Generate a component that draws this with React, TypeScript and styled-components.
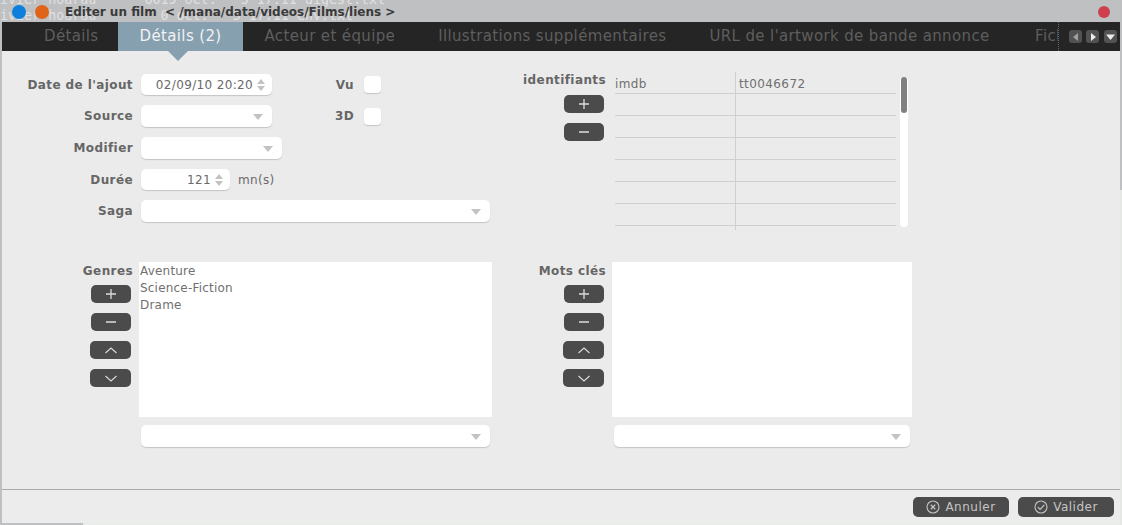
import React from "react";
import styled, { createGlobalStyle } from "styled-components";

const Global = createGlobalStyle`
  html, body { margin: 0; padding: 0; background: #bfc0c2; overflow: hidden; }
  * { box-sizing: border-box; }
`;

const Screen = styled.div`
  position: relative;
  width: 1122px;
  height: 525px;
  overflow: hidden;
  background: #bfc0c2;
  font-family: "DejaVu Sans", sans-serif;
  display: flex;
  flex-direction: column;
`;

const GhostText = styled.pre`
  position: absolute;
  left: 0;
  top: -8px;
  margin: 0;
  font: 13.33px/16px "DejaVu Sans Mono", monospace;
  color: #e0e0e0;
`;

const TitleBar = styled.div`
  position: relative;
  height: 22px;
  flex: none;
  display: flex;
  align-items: center;
  padding: 2px 0 0 12px;
`;

const Dot = styled.span<{ $c: string }>`
  width: 14px;
  height: 14px;
  border-radius: 50%;
  background: ${(p) => p.$c};
  margin-right: 9px;
  flex: none;
`;

const Title = styled.span`
  font-size: 12px;
  font-weight: 700;
  color: #3a3a3a;
  margin-left: 7px;
  white-space: pre;
  flex: 1;
`;

const CloseDot = styled(Dot)`
  width: 12px;
  height: 12px;
  margin-right: 12px;
`;

const TabBar = styled.div`
  position: relative;
  height: 29px;
  flex: none;
  margin: 0 2px;
  background: #252525;
  display: flex;
  align-items: center;
`;

const TabStrip = styled.div`
  width: 1057px;
  height: 100%;
  overflow: hidden;
  display: flex;
  padding-left: 20.5px;
  flex: none;
  border-right: 1px dotted #666;
`;

const Tab = styled.div<{ $active?: boolean; $right?: number }>`
  position: relative;
  height: 100%;
  flex: none;
  padding: 0 ${(p) => p.$right ?? 21.5}px 2px 21.5px;
  display: flex;
  align-items: center;
  font-size: 15px;
  letter-spacing: 0.36px;
  white-space: nowrap;
  color: ${(p) => (p.$active ? "#f2f2f2" : "#5e5e5e")};
  background: ${(p) => (p.$active ? "#86a0b0" : "transparent")};
`;

const TabArrow = styled.span`
  position: absolute;
  z-index: 2;
  left: 168px;
  top: 51px;
  width: 0;
  height: 0;
  border-left: 10.5px solid transparent;
  border-right: 10.5px solid transparent;
  border-top: 10px solid #86a0b0;
`;

const ScrollButtons = styled.div`
  display: flex;
  margin-left: 10px;
  gap: 4px;
`;

const ScrollBtn = styled.span<{ $dim?: boolean; $apart?: boolean }>`
  width: 13px;
  height: 13px;
  border-radius: 3px;
  background: #525252;
  display: flex;
  align-items: center;
  justify-content: center;
  color: ${(p) => (p.$dim ? "#a0a0a0" : "#ececec")};
  margin-left: ${(p) => (p.$apart ? "1px" : "0")};
`;

const Panel = styled.div`
  flex: none;
  height: 438px;
  margin: 0 2px;
  background: #ebebeb;
  display: flex;
  flex-direction: column;
`;

const TopArea = styled.div`
  height: 190px;
  flex: none;
  margin-top: 21px;
  display: flex;
`;

const FormCol = styled.div`
  width: 488px;
  flex: none;
  display: flex;
  flex-direction: column;
  padding-top: 2px;
`;

const Row = styled.div`
  display: flex;
  align-items: center;
  margin-bottom: 10px;
`;

const labelText = `
  font-size: 12px;
  font-weight: 700;
  letter-spacing: 0.4px;
  color: #666;
`;

const Label = styled.label`
  ${labelText}
  width: 131px;
  flex: none;
  margin-right: 8px;
  text-align: right;
`;

const CheckLabel = styled.label`
  ${labelText}
  margin-left: 63px;
  width: 19px;
  text-align: right;
`;

const Check = styled.span`
  width: 17px;
  height: 17px;
  margin-left: 10px;
  border-radius: 4px;
  background: #fff;
  box-shadow: 0 1px 1px #c4c4c4;
`;

const Field = styled.div<{ $w: number; $h?: number }>`
  width: ${(p) => p.$w}px;
  height: ${(p) => p.$h ?? 22}px;
  flex: none;
  background: #fff;
  border-radius: 5px;
  box-shadow: 0 1px 1px #c4c4c4;
  display: flex;
  align-items: center;
  justify-content: flex-end;
  padding-right: 7px;
  font-size: 12px;
  letter-spacing: 0.35px;
  color: #6a6a6a;
`;

const ComboField = styled(Field)`
  padding-right: 9px;
`;

const Caret = styled.span`
  width: 0;
  height: 0;
  border-left: 5.5px solid transparent;
  border-right: 5.5px solid transparent;
  border-top: 6px solid #c2c2c2;
  margin-top: 2px;
`;

const Spin = styled.span`
  display: flex;
  flex-direction: column;
  gap: 2px;
  margin-left: 4px;
  &::before, &::after {
    content: "";
    width: 0;
    height: 0;
    border-left: 4.5px solid transparent;
    border-right: 4.5px solid transparent;
  }
  &::before { border-bottom: 5px solid #c2c2c2; }
  &::after { border-top: 5px solid #c2c2c2; }
`;

const Unit = styled.span`
  margin-left: 8px;
  font-size: 12px;
  letter-spacing: 0.3px;
  color: #6a6a6a;
`;

const SideCol = styled.div`
  width: 116px;
  flex: none;
  display: flex;
  flex-direction: column;
  align-items: flex-end;
`;

const SideLabel = styled.label`
  ${labelText}
  line-height: 15px;
  margin: 1px 0 7px;
`;

const ButtonStack = styled.div`
  display: flex;
  flex-direction: column;
  align-items: flex-end;
  gap: 10px;
  margin-right: 2px;
`;

const IconBtn = styled.button<{ $wide?: boolean }>`
  width: ${(p) => (p.$wide ? 41 : 40)}px;
  height: 18px;
  padding: 0;
  border: none;
  border-radius: 5px;
  background: #4b4b4b;
  color: #dcdcdc;
  display: flex;
  align-items: center;
  justify-content: center;
`;

const TableBox = styled.div`
  width: 281px;
  height: 158px;
  flex: none;
  margin-left: 9px;
  overflow: hidden;
`;

const TableRow = styled.div`
  display: grid;
  grid-template-columns: 120px 1fr;
  height: 22px;
  border-bottom: 1px solid #cfcfcf;
  font-size: 12px;
  letter-spacing: 0.4px;
  line-height: 24px;
  color: #707070;
`;

const Cell = styled.div`
  & + & { border-left: 1px solid #d0d0d0; padding-left: 3px; }
`;

const ScrollTrack = styled.div`
  width: 8px;
  height: 150px;
  margin: 5px 0 0 4px;
  flex: none;
  border-radius: 4px;
  background: #fff;
  padding: 0 1px;
`;

const ScrollThumb = styled.div`
  height: 36px;
  border-radius: 3px;
  background: #808080;
`;

const BottomArea = styled.div`
  display: flex;
  flex: none;
`;

const ListGroup = styled.div<{ $w: number }>`
  width: ${(p) => p.$w}px;
  flex: none;
  display: flex;
`;

const ListSide = styled.div<{ $w: number }>`
  width: ${(p) => p.$w}px;
  flex: none;
  display: flex;
  flex-direction: column;
  align-items: flex-end;
  padding-right: 6px;
`;

const ListLabel = styled(SideLabel)`
  margin: 2px 0 6px;
`;

const ListCol = styled.div<{ $w: number }>`
  width: ${(p) => p.$w}px;
  flex: none;
  display: flex;
  flex-direction: column;
  gap: 8px;
`;

const ListBox = styled.div`
  height: 155px;
  background: #fff;
  padding-top: 1px;
  font-size: 12px;
  letter-spacing: 0.2px;
  line-height: 17px;
  color: #707070;
`;

const ListItem = styled.div`
  padding-left: 1px;
`;

const ComboSlot = styled.div`
  padding-left: 2px;
`;

const Footer = styled.div`
  flex: 1;
  margin: 0 2px 2px;
  background: #ececec;
  border-top: 1px solid #aaa;
  display: flex;
  justify-content: flex-end;
  align-items: flex-start;
  gap: 9px;
  padding: 7px 6px 0 0;
`;

const BottomStrip = styled.div`
  position: absolute;
  left: 83px;
  right: 0;
  bottom: 0;
  height: 2px;
  background: #e9ece9;
`;

const RightStrip = styled.div`
  position: absolute;
  top: 190px;
  right: 0;
  bottom: 0;
  width: 2px;
  background: #e6e8e6;
`;

const FootBtn = styled.button`
  width: 96px;
  height: 20px;
  border: none;
  border-radius: 5px;
  padding: 0;
  background: #4b4b4b;
  color: #c4c4c4;
  font: 12px "DejaVu Sans", sans-serif;
  letter-spacing: 0.5px;
  display: flex;
  align-items: center;
  justify-content: center;
  gap: 5px;
`;

const Plus = () => (
  <svg width="12" height="12" viewBox="0 0 12 12"><path d="M1 6h10M6 1v10" stroke="currentColor" strokeWidth="1.3" fill="none" /></svg>
);
const Minus = () => (
  <svg width="12" height="12" viewBox="0 0 12 12"><path d="M1 6h10" stroke="currentColor" strokeWidth="1.5" fill="none" /></svg>
);
const Up = () => (
  <svg width="14" height="9" viewBox="0 0 14 9"><path d="M1.5 7L7 2l5.5 5" stroke="currentColor" strokeWidth="1.1" fill="none" /></svg>
);
const Down = () => (
  <svg width="14" height="9" viewBox="0 0 14 9"><path d="M1.5 2L7 7l5.5-5" stroke="currentColor" strokeWidth="1.1" fill="none" /></svg>
);
const XCircle = () => (
  <svg width="14" height="14" viewBox="0 0 14 14" fill="none" stroke="currentColor"><circle cx="7" cy="7" r="6" strokeWidth="1.1" /><path d="M4.8 4.8l4.4 4.4M9.2 4.8l-4.4 4.4" strokeWidth="1.3" /></svg>
);
const CheckCircle = () => (
  <svg width="14" height="14" viewBox="0 0 14 14" fill="none" stroke="currentColor"><circle cx="7" cy="7" r="6" strokeWidth="1.1" /><path d="M3.8 7.2l2.3 2.3 4.2-4.6" strokeWidth="1.2" /></svg>
);
const TriLeft = () => (<svg width="6" height="8" viewBox="0 0 6 8"><path d="M5 0v8L0 4z" fill="currentColor" /></svg>);
const TriRight = () => (<svg width="6" height="8" viewBox="0 0 6 8"><path d="M1 0v8l5-4z" fill="currentColor" /></svg>);
const TriDown = () => (<svg width="9" height="6" viewBox="0 0 9 6"><path d="M0 0.5h9L4.5 6z" fill="currentColor" /></svg>);

const ghost = "ivier hoarau      6019 oct.   5 17:11 digest.txt\nivier hoarau        0 oct.   5 17:11 env.txt";

const Combo = ({ w }: { w: number }) => (
  <ComboField $w={w}><Caret /></ComboField>
);

const Buttons = ({ arrows }: { arrows?: boolean }) => (
  <ButtonStack>
    <IconBtn><Plus /></IconBtn>
    <IconBtn><Minus /></IconBtn>
    {arrows && <IconBtn $wide><Up /></IconBtn>}
    {arrows && <IconBtn $wide><Down /></IconBtn>}
  </ButtonStack>
);

const emptyRows = [1, 2, 3, 4, 5, 6, 7];

export default function App() {
  return (
    <Screen>
      <Global />
      <GhostText>{ghost}</GhostText>
      <TitleBar>
        <Dot $c="#0f7fdc" />
        <Dot $c="#e0631a" />
        <Title>{"Editer un film  < /mana/data/videos/Films/liens >"}</Title>
        <CloseDot $c="#cf3f4c" />
      </TitleBar>
      <TabBar>
        <TabStrip>
          <Tab $right={19.5}>Détails</Tab>
          <Tab $active>Détails (2)</Tab>
          <Tab>Acteur et équipe</Tab>
          <Tab>Illustrations supplémentaires</Tab>
          <Tab $right={24}>URL de l'artwork de bande annonce</Tab>
          <Tab>Fichiers</Tab>
        </TabStrip>
        <ScrollButtons>
          <ScrollBtn $dim><TriLeft /></ScrollBtn>
          <ScrollBtn><TriRight /></ScrollBtn>
          <ScrollBtn $apart><TriDown /></ScrollBtn>
        </ScrollButtons>
      </TabBar>
      <TabArrow />
      <Panel>
        <TopArea>
          <FormCol>
            <Row>
              <Label>Date de l'ajout</Label>
              <Field $w={131} $h={21}>02/09/10 20:20<Spin /></Field>
              <CheckLabel>Vu</CheckLabel>
              <Check />
            </Row>
            <Row>
              <Label>Source</Label>
              <Combo w={131} />
              <CheckLabel>3D</CheckLabel>
              <Check />
            </Row>
            <Row>
              <Label>Modifier</Label>
              <Combo w={141} />
            </Row>
            <Row>
              <Label>Durée</Label>
              <Field $w={89} $h={21}>121<Spin /></Field>
              <Unit>mn(s)</Unit>
            </Row>
            <Row>
              <Label>Saga</Label>
              <Combo w={349} />
            </Row>
          </FormCol>
          <SideCol>
            <SideLabel>identifiants</SideLabel>
            <Buttons />
          </SideCol>
          <TableBox>
            <TableRow><Cell>imdb</Cell><Cell>tt0046672</Cell></TableRow>
            {emptyRows.map((r) => (
              <TableRow key={r}><Cell /><Cell /></TableRow>
            ))}
          </TableBox>
          <ScrollTrack><ScrollThumb /></ScrollTrack>
        </TopArea>
        <BottomArea>
          <ListGroup $w={490}>
            <ListSide $w={137}>
              <ListLabel>Genres</ListLabel>
              <Buttons arrows />
            </ListSide>
            <ListCol $w={353}>
              <ListBox>
                <ListItem>Aventure</ListItem>
                <ListItem>Science-Fiction</ListItem>
                <ListItem>Drame</ListItem>
              </ListBox>
              <ComboSlot><Combo w={349} /></ComboSlot>
            </ListCol>
          </ListGroup>
          <ListGroup $w={420}>
            <ListSide $w={120}>
              <ListLabel>Mots clés</ListLabel>
              <Buttons arrows />
            </ListSide>
            <ListCol $w={300}>
              <ListBox />
              <ComboSlot><Combo w={296} /></ComboSlot>
            </ListCol>
          </ListGroup>
        </BottomArea>
      </Panel>
      <Footer>
        <FootBtn><XCircle />Annuler</FootBtn>
        <FootBtn><CheckCircle />Valider</FootBtn>
      </Footer>
      <BottomStrip />
      <RightStrip />
    </Screen>
  );
}
